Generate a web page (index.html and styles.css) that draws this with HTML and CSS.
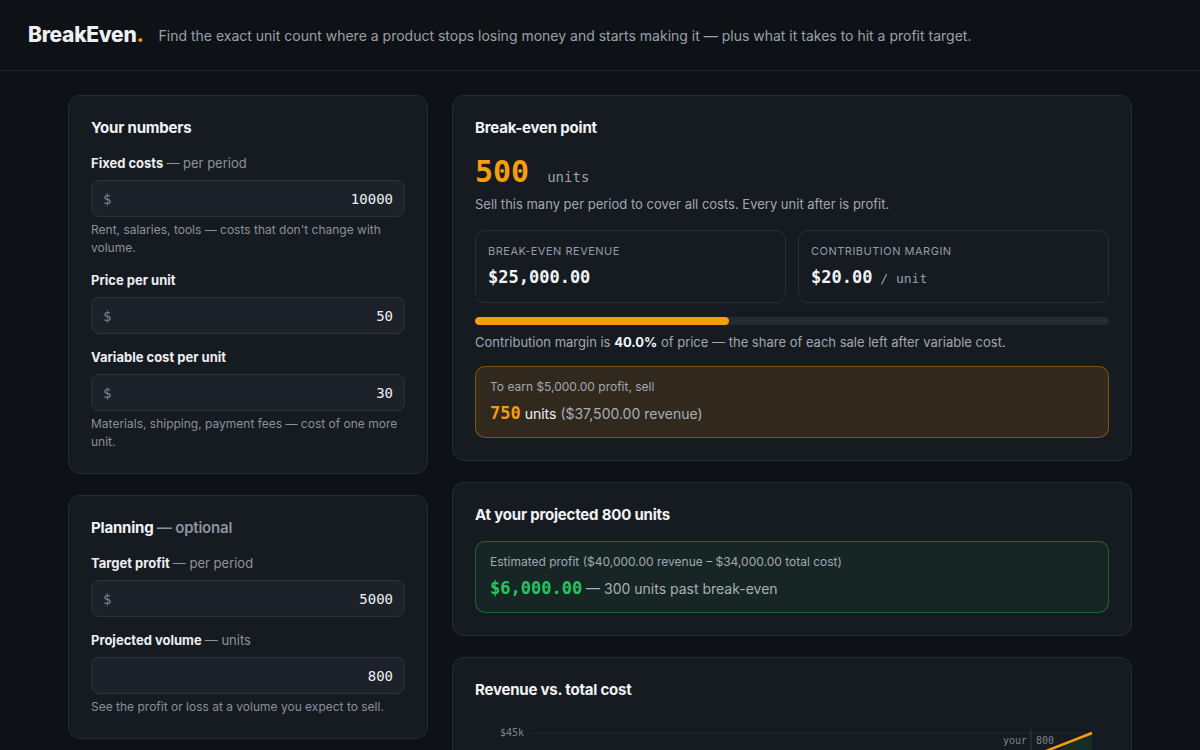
FILE: index.html
```html
<!DOCTYPE html>
<html lang="en">
<head>
    <meta charset="UTF-8">
    <meta name="viewport" content="width=device-width, initial-scale=1.0">
    <title>BreakEven - Break-even calculator</title>
    <link rel="stylesheet" href="styles.css">
</head>
<body>
    <header class="topbar">
        <div class="logo">BreakEven<span class="dot">.</span></div>
        <p class="tagline">Find the exact unit count where a product stops losing money and starts making it — plus what it takes to hit a profit target.</p>
    </header>

    <main class="layout">
        <!-- Inputs -->
        <div class="col">
            <section class="card">
                <h2>Your numbers</h2>

                <div class="field">
                    <label>Fixed costs <span class="muted">— per period</span></label>
                    <div class="input">
                        <span class="prefix">$</span>
                        <input type="text" value="10000">
                    </div>
                    <p class="hint">Rent, salaries, tools — costs that don't change with volume.</p>
                </div>

                <div class="field">
                    <label>Price per unit</label>
                    <div class="input">
                        <span class="prefix">$</span>
                        <input type="text" value="50">
                    </div>
                </div>

                <div class="field">
                    <label>Variable cost per unit</label>
                    <div class="input">
                        <span class="prefix">$</span>
                        <input type="text" value="30">
                    </div>
                    <p class="hint">Materials, shipping, payment fees — cost of one more unit.</p>
                </div>
            </section>

            <section class="card">
                <h2>Planning <span class="muted">— optional</span></h2>

                <div class="field">
                    <label>Target profit <span class="muted">— per period</span></label>
                    <div class="input">
                        <span class="prefix">$</span>
                        <input type="text" value="5000">
                    </div>
                </div>

                <div class="field">
                    <label>Projected volume <span class="muted">— units</span></label>
                    <div class="input">
                        <input type="text" value="800">
                    </div>
                    <p class="hint">See the profit or loss at a volume you expect to sell.</p>
                </div>
            </section>
        </div>

        <!-- Results -->
        <div class="col">
            <section class="card">
                <h2>Break-even point</h2>
                <div class="big">
                    <span class="big-num">500</span>
                    <span class="big-unit">units</span>
                </div>
                <p class="desc">Sell this many per period to cover all costs. Every unit after is profit.</p>

                <div class="metrics">
                    <div class="metric">
                        <div class="metric-label">Break-even revenue</div>
                        <div class="metric-value">$25,000.00</div>
                    </div>
                    <div class="metric">
                        <div class="metric-label">Contribution margin</div>
                        <div class="metric-value">$20.00<span class="per"> / unit</span></div>
                    </div>
                </div>

                <div class="bar"><div class="bar-fill" style="width: 40%"></div></div>
                <p class="desc">Contribution margin is <b>40.0%</b> of price — the share of each sale left after variable cost.</p>

                <div class="callout target">
                    <div class="callout-top">To earn $5,000.00 profit, sell</div>
                    <div class="callout-main">
                        <span class="num orange">750</span> <span class="strong">units</span> ($37,500.00 revenue)
                    </div>
                </div>
            </section>

            <section class="card">
                <h2>At your projected 800 units</h2>
                <div class="callout profit">
                    <div class="callout-top">Estimated profit ($40,000.00 revenue – $34,000.00 total cost)</div>
                    <div class="callout-main">
                        <span class="num green">$6,000.00</span> — 300 units past break-even
                    </div>
                </div>
            </section>

            <section class="card">
                <h2>Revenue vs. total cost</h2>
                <svg class="chart" width="634" height="250" viewBox="0 0 634 250">
                    <!-- grid -->
                    <line x1="57" y1="17" x2="617" y2="17" class="grid"/>
                    <line x1="57" y1="72" x2="617" y2="72" class="grid"/>
                    <line x1="57" y1="127" x2="617" y2="127" class="grid"/>
                    <line x1="57" y1="182" x2="617" y2="182" class="grid"/>
                    <text x="49" y="20" class="axis" text-anchor="end">$45k</text>
                    <text x="49" y="75" class="axis" text-anchor="end">$34k</text>
                    <text x="49" y="130" class="axis" text-anchor="end">$23k</text>
                    <text x="49" y="185" class="axis" text-anchor="end">$11k</text>

                    <!-- profit area from break-even (500) to 900 -->
                    <polygon points="368,139.2 617,17 617,56.1" class="profit-area"/>

                    <!-- projected marker -->
                    <line x1="556" y1="14" x2="556" y2="237" class="marker"/>
                    <text x="552" y="28" class="axis" text-anchor="end">your</text>
                    <text x="561" y="28" class="axis">800</text>

                    <!-- lines -->
                    <line x1="57" y1="188.1" x2="617" y2="56.1" class="cost"/>
                    <line x1="57" y1="237" x2="617" y2="17" class="revenue"/>
                </svg>
            </section>
        </div>
    </main>
</body>
</html>
```

FILE: styles.css
```css
* {
    margin: 0;
    padding: 0;
    box-sizing: border-box;
}

body {
    font-family: Inter, "Noto Sans", sans-serif;
    background-color: #0e1116;
    color: #e6e8eb;
}

/* Barra do topo */
.topbar {
    height: 71px;
    display: flex;
    align-items: center;
    gap: 15px;
    padding: 0 28px 2px;
    border-bottom: 1px solid #22262d;
}

.logo {
    font-size: 21px;
    font-weight: 800;
    letter-spacing: -0.3px;
    color: #eef0f3;
}

.logo .dot {
    color: #f59e0b;
}

.tagline {
    font-size: 14px;
    color: #9aa1ab;
    padding-top: 2px;
}

/* Colunas */
.layout {
    display: grid;
    grid-template-columns: 360px 680px;
    gap: 24px;
    justify-content: center;
    padding-top: 24px;
}

.col {
    display: flex;
    flex-direction: column;
    gap: 21px;
}

.card {
    background-color: #161a21;
    border: 1px solid #272b33;
    border-radius: 12px;
    padding: 22px;
}

h2 {
    font-size: 15px;
    font-weight: 700;
    letter-spacing: -0.2px;
    color: #f1f3f5;
    line-height: 20px;
    margin-bottom: 16px;
}

.muted {
    color: #8d949e;
    font-weight: 400;
}

h2 .muted {
    font-weight: 600;
}

/* Campos */
.field {
    margin-bottom: 14px;
}

.field:last-child {
    margin-bottom: 0;
}

label {
    display: block;
    font-size: 13px;
    font-weight: 700;
    color: #eceef1;
    line-height: 18px;
    margin-bottom: 8px;
}

.input {
    display: flex;
    align-items: center;
    height: 37px;
    background-color: #1d2129;
    border: 1px solid #2d323b;
    border-radius: 8px;
    padding: 0 11px;
}

.prefix {
    font-family: "DejaVu Sans Mono", monospace;
    font-size: 14px;
    color: #7d848e;
}

.input input {
    flex: 1;
    min-width: 0;
    background: transparent;
    border: none;
    outline: none;
    text-align: right;
    font-family: "DejaVu Sans Mono", monospace;
    font-size: 14px;
    color: #eef0f3;
}

.hint {
    font-size: 12px;
    line-height: 18px;
    color: #8a919b;
    margin-top: 4px;
}

/* Resultado principal */
.big {
    display: flex;
    align-items: baseline;
    gap: 18px;
    height: 36px;
    line-height: 36px;
}

.big-num {
    font-family: "DejaVu Sans Mono", monospace;
    font-size: 30px;
    font-weight: 700;
    color: #f59e0b;
}

.big-unit {
    font-family: "DejaVu Sans Mono", monospace;
    font-size: 14px;
    color: #9aa1ab;
}

.desc {
    font-size: 13px;
    line-height: 18px;
    color: #a2a8b1;
    margin-top: 5px;
}

.desc b {
    color: #f4f5f7;
}

.metrics {
    display: grid;
    grid-template-columns: 1fr 1fr;
    gap: 12px;
    margin-top: 17px;
}

.metric {
    border: 1px solid #2a2f37;
    border-radius: 10px;
    padding: 12px 12px 13px;
}

.metric-label {
    font-size: 11px;
    letter-spacing: 0.5px;
    text-transform: uppercase;
    color: #959ca6;
    line-height: 16px;
}

.metric-value {
    font-family: "DejaVu Sans Mono", monospace;
    font-size: 17px;
    font-weight: 700;
    color: #f1f3f5;
    margin-top: 8px;
    line-height: 20px;
}

.per {
    font-size: 13px;
    font-weight: 400;
    color: #9aa1ab;
}

.bar {
    height: 8px;
    border-radius: 4px;
    background-color: #262b33;
    margin-top: 14px;
    overflow: hidden;
}

.bar-fill {
    height: 100%;
    border-radius: 4px;
    background-color: #f59e0b;
}

.bar + .desc {
    margin-top: 8px;
}

/* Caixas de destaque */
.callout {
    border-radius: 10px;
    padding: 12px 14px 13px;
}

.callout.target {
    margin-top: 15px;
    background-color: rgba(245, 158, 11, 0.12);
    border: 1px solid rgba(245, 158, 11, 0.4);
}

.callout.profit {
    margin-top: 0;
    background-color: rgba(34, 197, 94, 0.08);
    border: 1px solid rgba(34, 197, 94, 0.4);
}

.callout-top {
    font-size: 12px;
    line-height: 16px;
    color: #a2a8b1;
}

.callout-main {
    font-size: 14px;
    color: #a8aeb7;
    margin-top: 8px;
    line-height: 20px;
}

.num {
    font-family: "DejaVu Sans Mono", monospace;
    font-weight: 700;
    font-size: 17px;
}

.orange {
    color: #f59e0b;
}

.green {
    color: #22c55e;
}

.strong {
    color: #f1f3f5;
}

/* Gráfico */
.chart {
    display: block;
    margin-top: 0;
}

.chart .grid {
    stroke: #23272e;
    stroke-width: 1;
}

.chart .axis {
    font-family: "DejaVu Sans Mono", monospace;
    font-size: 10px;
    fill: #7d848e;
}

.chart .marker {
    stroke: #363b44;
    stroke-width: 1;
}

.chart .profit-area {
    fill: rgba(34, 197, 94, 0.12);
}

.chart .revenue {
    stroke: #f59e0b;
    stroke-width: 2.5;
}

.chart .cost {
    stroke: #8b93a0;
    stroke-width: 2;
}
```
